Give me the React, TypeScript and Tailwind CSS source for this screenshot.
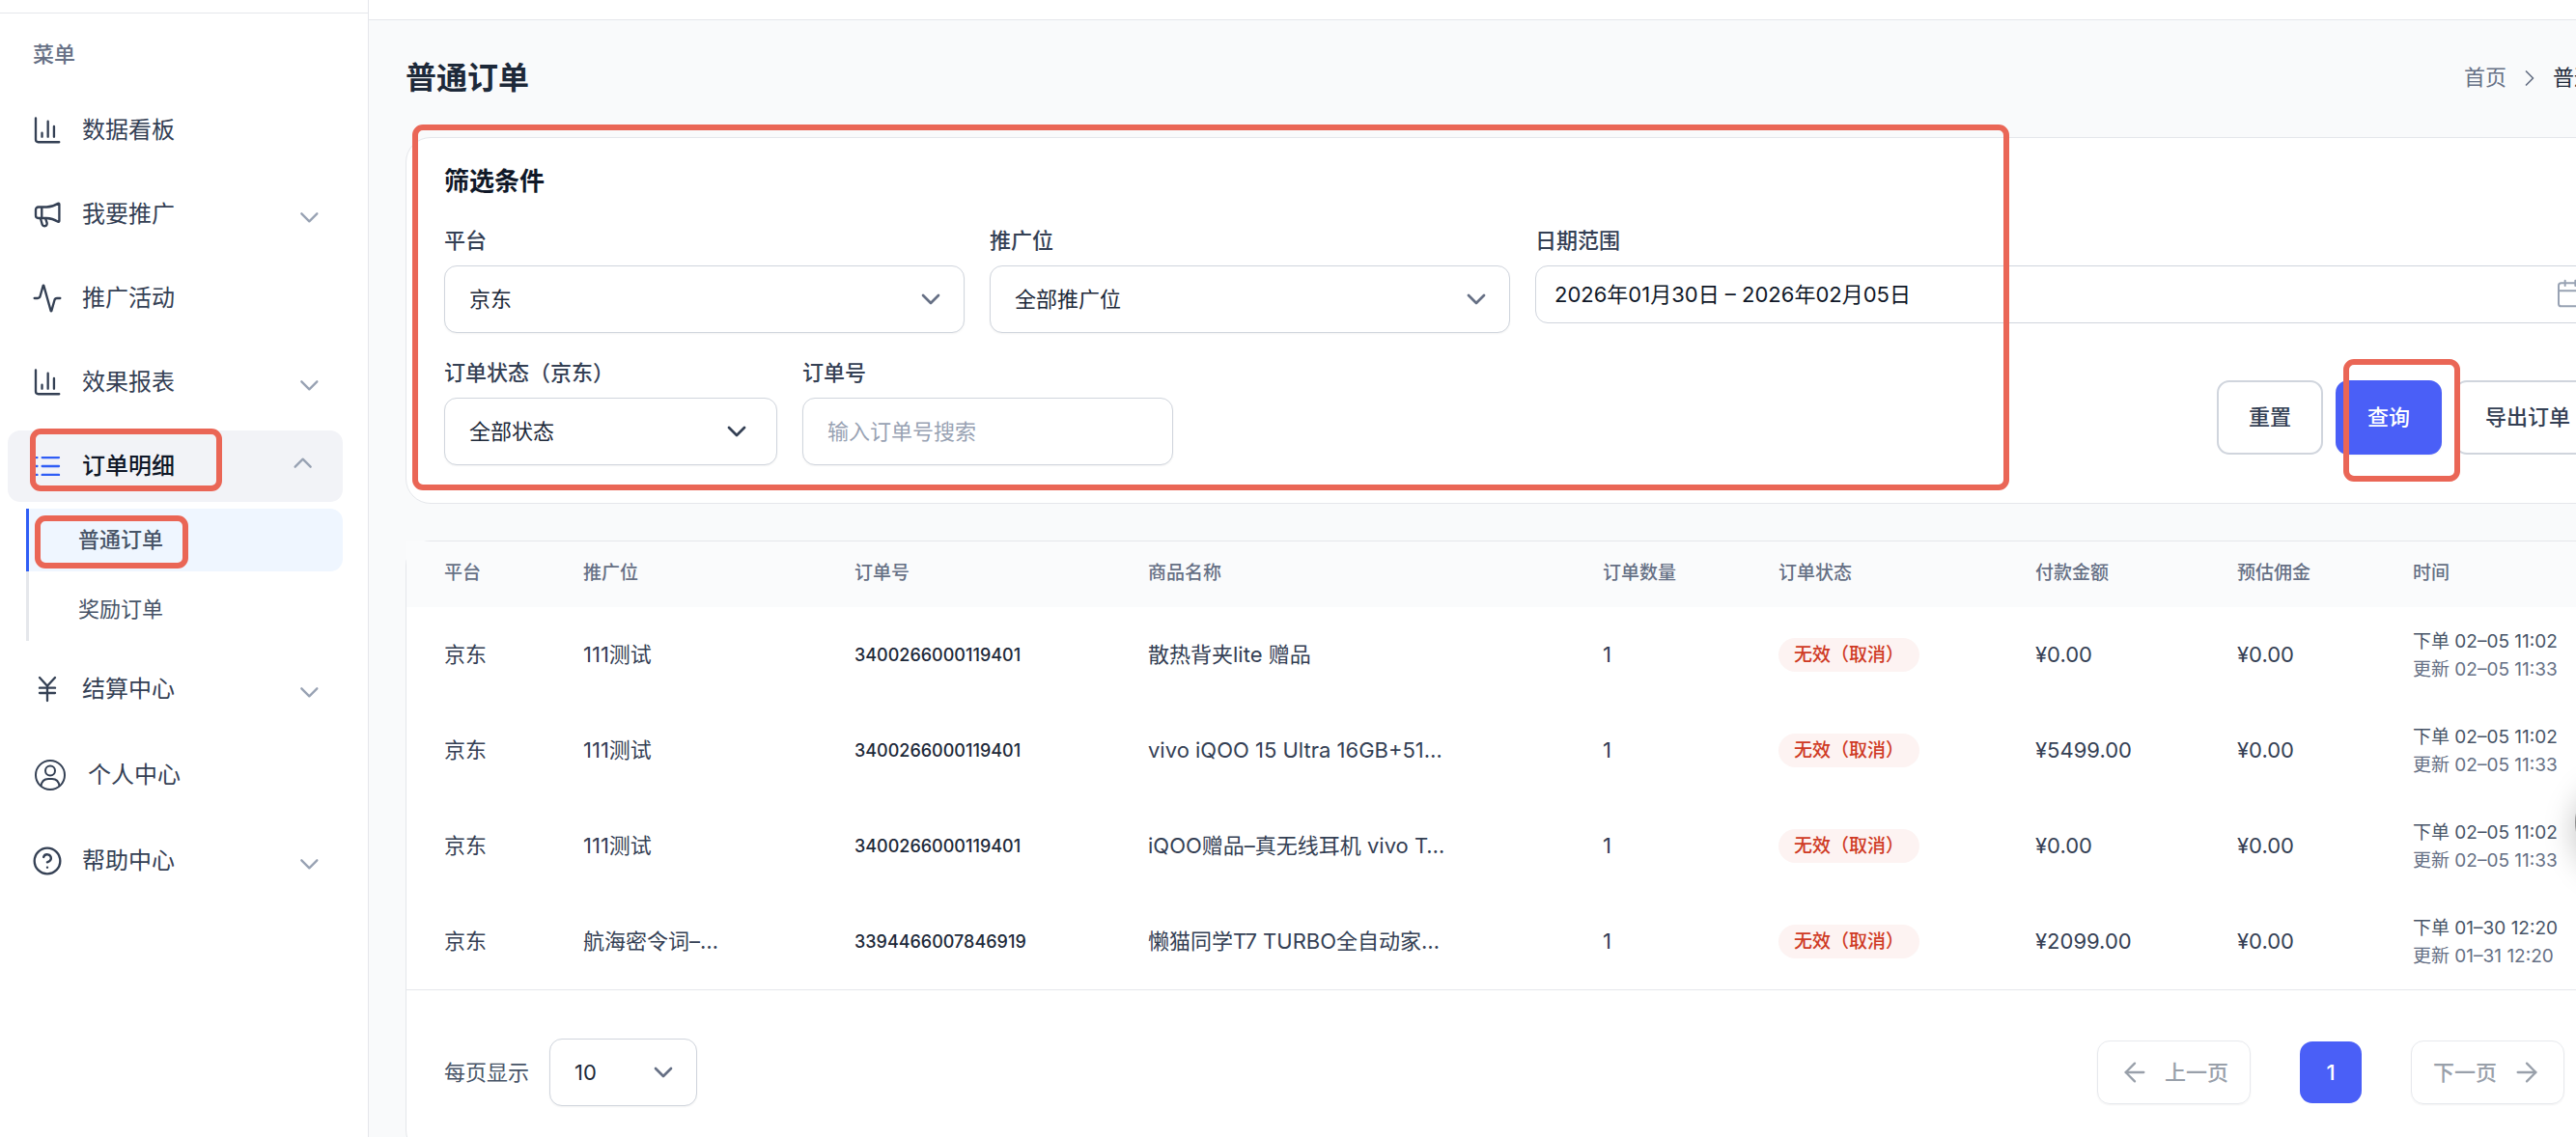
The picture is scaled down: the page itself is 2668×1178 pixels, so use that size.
import type { ReactNode } from 'react';
import {
  Activity,
  ArrowLeft,
  ArrowRight,
  Calendar,
  ChevronDown,
  ChevronRight,
  CircleHelp,
  JapaneseYen,
} from 'lucide-react';

interface MenuItem {
  label: string;
  icon: ReactNode;
  expandable?: boolean;
}

interface Order {
  platform: string;
  position: string;
  orderNo: string;
  product: string;
  count: number;
  status: string;
  paid: string;
  commission: string;
  createdAt: string;
  updatedAt: string;
}

const topMenu: MenuItem[] = [
  { label: '数据看板', icon: <BarsIcon /> },
  { label: '我要推广', icon: <MegaphoneIcon />, expandable: true },
  { label: '推广活动', icon: <Activity className="size-8" strokeWidth={1.75} /> },
  { label: '效果报表', icon: <BarsIcon />, expandable: true },
];

const bottomMenu: MenuItem[] = [
  { label: '结算中心', icon: <JapaneseYen className="size-8" strokeWidth={1.75} />, expandable: true },
  { label: '个人中心', icon: <UserIcon /> },
  { label: '帮助中心', icon: <CircleHelp className="size-8" strokeWidth={1.75} />, expandable: true },
];

const orders: Order[] = [
  {
    platform: '京东',
    position: '111测试',
    orderNo: '3400266000119401',
    product: '散热背夹lite 赠品',
    count: 1,
    status: '无效（取消）',
    paid: '¥0.00',
    commission: '¥0.00',
    createdAt: '02–05 11:02',
    updatedAt: '02–05 11:33',
  },
  {
    platform: '京东',
    position: '111测试',
    orderNo: '3400266000119401',
    product: 'vivo iQOO 15 Ultra 16GB+51…',
    count: 1,
    status: '无效（取消）',
    paid: '¥5499.00',
    commission: '¥0.00',
    createdAt: '02–05 11:02',
    updatedAt: '02–05 11:33',
  },
  {
    platform: '京东',
    position: '111测试',
    orderNo: '3400266000119401',
    product: 'iQOO赠品–真无线耳机 vivo T…',
    count: 1,
    status: '无效（取消）',
    paid: '¥0.00',
    commission: '¥0.00',
    createdAt: '02–05 11:02',
    updatedAt: '02–05 11:33',
  },
  {
    platform: '京东',
    position: '航海密令词–…',
    orderNo: '3394466007846919',
    product: '懒猫同学T7 TURBO全自动家…',
    count: 1,
    status: '无效（取消）',
    paid: '¥2099.00',
    commission: '¥0.00',
    createdAt: '01–30 12:20',
    updatedAt: '01–31 12:20',
  },
];

const columns = [
  { title: '平台', width: 'w-[144px]' },
  { title: '推广位', width: 'w-[281px]' },
  { title: '订单号', width: 'w-[304px]' },
  { title: '商品名称', width: 'w-[471px]' },
  { title: '订单数量', width: 'w-[182px]' },
  { title: '订单状态', width: 'w-[266px]' },
  { title: '付款金额', width: 'w-[209px]' },
  { title: '预估佣金', width: 'w-[182px]' },
  { title: '时间', width: 'w-auto' },
];

function BarsIcon() {
  return (
    <svg viewBox="0 0 24 24" className="size-8" fill="none" stroke="currentColor" strokeWidth={1.75} strokeLinecap="round" strokeLinejoin="round">
      <path d="M3 2.5v16.7a2 2 0 0 0 2 2h16.2" />
      <path d="M7.9 17v-3M12.5 17V5M17.2 17V9" />
    </svg>
  );
}

function MegaphoneIcon() {
  return (
    <svg viewBox="0 0 24 24" className="size-8" fill="none" stroke="currentColor" strokeWidth={1.75} strokeLinecap="round" strokeLinejoin="round">
      <path d="M7.7 6.4H5a2 2 0 0 0-2 2V13a2 2 0 0 0 2 2h2.7zM7.7 6.4h3.8c3.2 0 6.3-1.2 8.9-2.8a.6.6 0 0 1 .9.5v13.2a.6.6 0 0 1-.9.5c-2.6-1.6-5.7-2.8-8.9-2.8H7.7" />
      <path d="M6.7 15.2l1.3 4.600a1.900 1.900 0 0 0 3.700-1.100l-1.100-3.500" />
    </svg>
  );
}

function ListIcon() {
  return (
    <svg viewBox="0 0 24 24" className="size-8 text-[#2f5df5]" fill="none" stroke="currentColor" strokeWidth={1.75} strokeLinecap="round">
      <path d="M8 5.3h13M8 12h13M8 18.7h13M3.5 5.3h.6M3.5 12h.6M3.5 18.7h.6" />
    </svg>
  );
}

function UserIcon() {
  return (
    <svg viewBox="0 0 38 36" className="h-9 w-[38px]" fill="none" stroke="currentColor" strokeWidth={2}>
      <circle cx="19" cy="18" r="15" />
      <circle cx="19" cy="13.5" r="5" />
      <path d="M9.5 29.5c.6-5 3.8-7.500 7.500-7.500h4c3.700 0 6.900 2.500 7.500 7.500" />
    </svg>
  );
}

function MenuChevron({ open }: { open?: boolean }) {
  return (
    <svg
      viewBox="0 0 24 24"
      className={open ? 'ml-auto size-8 rotate-180 text-[#98a2b3]' : 'ml-auto size-8 text-[#98a2b3]'}
      fill="none"
      stroke="currentColor"
      strokeWidth={1.75}
      strokeLinecap="round"
      strokeLinejoin="round"
    >
      <path d="m8.500 11.500 6 6 6-6" />
    </svg>
  );
}

// Red frame that points the reader at a control
function Marker({ className }: { className: string }) {
  return (
    <span
      aria-hidden="true"
      className={`pointer-events-none absolute z-10 rounded-[11px] border-[6px] border-[#ea6656] ${className}`}
    />
  );
}

function MenuRow({ item }: { item: MenuItem }) {
  return (
    <a href="#" className="flex items-center gap-5 rounded-[13px] py-[21px] pr-[22px] pl-[25px] text-2xl text-[#344054]">
      {item.icon}
      <span>{item.label}</span>
      {item.expandable && <MenuChevron />}
    </a>
  );
}

function Sidebar() {
  return (
    <aside className="flex w-[382px] shrink-0 flex-col border-r border-gray-200 bg-white">
      <div className="h-[14px] shrink-0 border-b border-gray-200" />
      <nav className="pt-[26px] pr-[26px] pl-2">
        <h2 className="mb-[26px] pl-[26px] text-[22px] leading-8 font-medium text-[#667085]">菜单</h2>
        <ul className="flex flex-col gap-[13px]">
          {topMenu.map((item) => (
            <li key={item.label}>
              <MenuRow item={item} />
            </li>
          ))}
          <li>
            <a
              href="#"
              className="relative flex items-center gap-5 rounded-[13px] bg-[#f2f3f7] py-[21px] pr-[22px] pl-[25px] text-2xl font-medium text-[#101828]"
            >
              <ListIcon />
              <span>订单明细</span>
              <MenuChevron open />
              <Marker className="-top-0.5 left-[23px] h-[65px] w-[199px]" />
            </a>
            <ul className="mt-[7px] ml-[19px] flex flex-col gap-[7px] border-l-[3px] border-gray-200 text-[22px] leading-[65px] text-[#475467]">
              <li>
                <a href="#" className="relative -ml-[3px] block rounded-r-[13px] border-l-[3px] border-[#2f5df5] bg-[#eff6ff] pl-[51px] font-medium">
                  普通订单
                  <Marker className="top-[7px] left-1.5 h-[55px] w-[159px]" />
                </a>
              </li>
              <li>
                <a href="#" className="block pl-[51px]">奖励订单</a>
              </li>
            </ul>
          </li>
          {bottomMenu.map((item) => (
            <li key={item.label}>
              <MenuRow item={item} />
            </li>
          ))}
        </ul>
      </nav>
    </aside>
  );
}

function SelectField({ id, label, value, dark }: { id: string; label: string; value: string; dark?: boolean }) {
  return (
    <div>
      <label htmlFor={id} className="mb-2.5 block leading-8 font-medium text-[#344054]">
        {label}
      </label>
      <div className="relative">
        <select
          id={id}
          className="h-[70px] w-full appearance-none rounded-[13px] border border-[#d0d5dd] bg-white px-[25px] text-[#1d2939] shadow-xs"
        >
          <option>{value}</option>
        </select>
        <ChevronDown
          className={
            dark
              ? 'pointer-events-none absolute top-[19px] right-[26px] size-8 text-[#344054]'
              : 'pointer-events-none absolute top-[19px] right-[19px] size-8 text-[#667085]'
          }
          strokeWidth={2}
        />
      </div>
    </div>
  );
}

function FilterCard() {
  return (
    <section className="relative rounded-[26px] border border-gray-200 bg-white px-[39px] pt-[26px] pb-[39px]">
      <h2 className="mb-[26px] text-[26px] leading-[38px] font-bold text-[#101828]">筛选条件</h2>

      <div className="grid grid-cols-[1fr_1fr_1104px] gap-x-[26px]">
        <SelectField id="platform" label="平台" value="京东" />
        <SelectField id="position" label="推广位" value="全部推广位" />
        <div>
          <label htmlFor="range" className="mb-2.5 block leading-8 font-medium text-[#344054]">
            日期范围
          </label>
          <div className="relative">
            <input
              id="range"
              readOnly
              value="2026年01月30日 – 2026年02月05日"
              className="h-[60px] w-full rounded-[13px] border border-[#d0d5dd] bg-white px-[19px] pb-1 text-[#101828]"
            />
            <Calendar className="pointer-events-none absolute top-[13px] right-4 size-8 text-[#98a2b3]" strokeWidth={1.5} />
          </div>
        </div>
      </div>

      <div className="mt-[25px] flex gap-[26px]">
        <div className="w-[345px]">
          <SelectField id="status" label="订单状态（京东）" value="全部状态" dark />
        </div>
        <div className="w-[384px]">
          <label htmlFor="order-no" className="mb-2.5 block leading-8 font-medium text-[#344054]">
            订单号
          </label>
          <input
            id="order-no"
            placeholder="输入订单号搜索"
            className="h-[70px] w-full rounded-[13px] border border-[#d0d5dd] bg-white px-[25px] shadow-xs placeholder:text-[#98a2b3]"
          />
        </div>
        <div className="mb-[11px] ml-auto flex gap-[13px] self-end font-medium text-[#344054]">
          <button type="button" className="h-[77px] rounded-[13px] border-2 border-[#d0d5dd] bg-white px-[31px]">
            重置
          </button>
          <div className="relative">
            <button type="button" className="h-[77px] rounded-[13px] bg-[#4a5ff7] px-[33px] text-white shadow-xs">
              查询
            </button>
            <Marker className="top-[-22px] left-2 h-[127px] w-[121px]" />
          </div>
          <button type="button" className="h-[77px] rounded-[13px] border-2 border-[#d0d5dd] bg-white px-[30px]">
            导出订单
          </button>
        </div>
      </div>

      <Marker className="top-[-14px] left-1.5 h-[379px] w-[1654px]" />
    </section>
  );
}

function OrderTable() {
  return (
    <section className="mt-[38px] rounded-[26px] border border-gray-200 bg-white">
      <table className="w-full table-fixed text-left text-[#344054]">
        <thead>
          <tr className="h-[68px] bg-[#fafbfc] text-[19px] text-[#667085]">
            {columns.map((column) => (
              <th key={column.title} className={`pb-0.5 pl-[39px] font-medium ${column.width}`}>
                {column.title}
              </th>
            ))}
          </tr>
        </thead>
        <tbody>
          {orders.map((order, index) => (
            <tr key={index} className="h-[99px]">
              <td className="pl-[39px]">{order.platform}</td>
              <td className="pl-[39px]">{order.position}</td>
              <td className="pl-[39px] text-[18px] font-medium text-[#1d2939]">{order.orderNo}</td>
              <td className="pl-[39px]">{order.product}</td>
              <td className="pl-[39px]">{order.count}</td>
              <td className="pl-[39px]">
                <span className="inline-block rounded-full bg-[#fdf3f2] px-4 text-[19px] leading-[35px] font-medium text-[#cf3a24]">
                  {order.status}
                </span>
              </td>
              <td className="pl-[39px]">{order.paid}</td>
              <td className="pl-[39px]">{order.commission}</td>
              <td className="pl-[39px] text-[19px] leading-[29px]">
                <div className="text-[#475467]">下单 {order.createdAt}</div>
                <div className="text-[#667085]">更新 {order.updatedAt}</div>
              </td>
            </tr>
          ))}
        </tbody>
      </table>

      <div className="flex items-center justify-between border-t border-gray-200 py-[50px] pr-[77px] pl-[39px]">
        <div className="flex items-center gap-[21px] text-[#475467]">
          <label htmlFor="page-size">每页显示</label>
          <div className="relative">
            <select
              id="page-size"
              className="h-[70px] w-[153px] appearance-none rounded-[13px] border border-[#d0d5dd] bg-white px-[25px] text-[#1d2939] shadow-xs"
            >
              <option>10</option>
            </select>
            <ChevronDown className="pointer-events-none absolute top-[19px] right-[19px] size-8 text-[#667085]" strokeWidth={2} />
          </div>
        </div>
        <div className="flex items-center gap-[51px] font-medium">
          <button type="button" className="flex h-[66px] items-center gap-[15px] rounded-[13px] border border-[#e7e9ed] px-[22px] text-[#99a0aa] shadow-xs">
            <ArrowLeft className="size-8" strokeWidth={1.75} />
            上一页
          </button>
          <button type="button" className="size-16 rounded-[13px] bg-[#4a5ff7] text-white">
            1
          </button>
          <button type="button" className="flex h-[66px] items-center gap-[15px] rounded-[13px] border border-[#e7e9ed] px-[22px] text-[#99a0aa] shadow-xs">
            下一页
            <ArrowRight className="size-8" strokeWidth={1.75} />
          </button>
        </div>
      </div>
    </section>
  );
}

export default function App() {
  return (
    <div className="relative flex h-screen overflow-hidden bg-[#f9fafb] font-['Inter','Noto_Sans_CJK_SC',sans-serif] text-[22px]">
      <Sidebar />

      {/* The content area is wider than the window and runs off its right edge */}
      <div className="-mr-[104px] flex-1">
        <div className="h-[21px] border-b border-gray-200 bg-white" />
        <main className="px-[38px] pt-[38px]">
          <div className="mb-10 flex items-center justify-between">
            <h1 className="text-[32px] leading-[43px] font-semibold text-[#1d2939]">普通订单</h1>
            <nav className="flex items-center gap-2.5 pr-0.5">
              <a href="#" className="text-[#667085]">首页</a>
              <ChevronRight className="size-7 text-[#667085]" strokeWidth={1.5} />
              <span className="text-[#1d2939]">普通订单</span>
            </nav>
          </div>
          <FilterCard />
          <OrderTable />
        </main>
      </div>

      <button
        type="button"
        aria-label="联系客服"
        className="absolute top-[804px] -right-[95px] size-24 rounded-full bg-[#8a8a8a] shadow-[0_8px_32px_rgba(0,0,0,0.25)]"
      />
    </div>
  );
}
